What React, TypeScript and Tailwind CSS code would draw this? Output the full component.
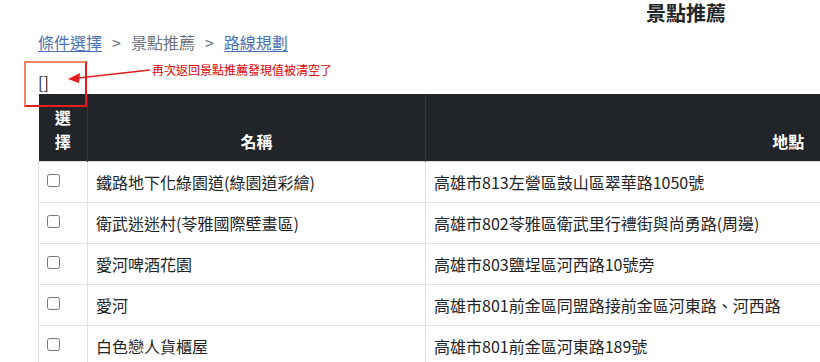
import React from "react";

const spots = [
  { name: "鐵路地下化綠園道(綠園道彩繪)", address: "高雄市813左營區鼓山區翠華路1050號" },
  { name: "衛武迷迷村(苓雅國際壁畫區)", address: "高雄市802苓雅區衛武里行禮街與尚勇路(周邊)" },
  { name: "愛河啤酒花園", address: "高雄市803鹽埕區河西路10號旁" },
  { name: "愛河", address: "高雄市801前金區同盟路接前金區河東路、河西路" },
  { name: "白色戀人貨櫃屋", address: "高雄市801前金區河東路189號" },
];

const App = () => {
  return (
    <div
      className="relative w-[820px] h-[362px] overflow-hidden bg-white text-[#212529]"
      style={{ fontFamily: '"Noto Sans CJK TC", "Noto Sans", sans-serif' }}
    >
      <div className="pl-[38px] w-[1334px]">
        {/* Title */}
        <h2 className="pt-[1px] flex justify-center text-[20px] font-bold leading-6 text-[#212529]">
          <span>景點推薦</span>
        </h2>

        {/* Breadcrumb */}
        <div className="mt-[5px] text-base leading-6 text-[#6c757d] flex items-center">
          <a href="#" className="text-[#4a72b8] underline underline-offset-2">
            條件選擇
          </a>
          <span className="px-[10px]">&gt;</span>
          <span>景點推薦</span>
          <span className="px-[10px]">&gt;</span>
          <a href="#" className="text-[#4a72b8] underline underline-offset-2">
            路線規劃
          </a>
        </div>

        <div className="mt-4 text-base leading-6">[]</div>

        {/* Table */}
        <table className="table-fixed border-collapse w-[1112px] text-base leading-6">
          <colgroup>
            <col className="w-[49px]" />
            <col className="w-[338px]" />
            <col className="w-[725px]" />
          </colgroup>
          <thead>
            <tr className="bg-[#212529] text-white h-[67px]">
              <th className="px-2 py-2 align-bottom font-bold text-center border-r border-[#32383e]">
                選<br />擇
              </th>
              <th className="px-2 py-2 align-bottom font-bold text-center border-r border-[#32383e]">名稱</th>
              <th className="px-2 py-2 align-bottom font-bold text-center">地點</th>
            </tr>
          </thead>
          <tbody>
            {spots.map((spot) => (
              <tr key={spot.name} className="h-[41px]">
                <td className="px-2 py-2 border border-[#dee2e6] align-top">
                  <input type="checkbox" className="block w-[13px] h-[13px] m-0 mt-1" />
                </td>
                <td className="px-2 py-2 border border-[#dee2e6] align-middle">{spot.name}</td>
                <td className="px-2 py-2 border border-[#dee2e6] align-middle">{spot.address}</td>
              </tr>
            ))}
          </tbody>
        </table>
      </div>

      {/* annotation */}
      <div className="absolute left-[24px] top-[61px] w-[63px] h-[46px] border-2 border-t-[#f38565] border-l-[#f38565] border-r-[#e51d1d] border-b-[#e51d1d]" />
      <svg className="absolute left-[64px] top-[64px]" width="90" height="20" viewBox="0 0 90 20">
        <line x1="86" y1="6" x2="14" y2="14" stroke="#e51d1d" strokeWidth="1.3" />
        <polygon points="4,15 16,9 15,19" fill="#e51d1d" />
      </svg>
      <div className="absolute left-[152px] top-[62px] text-[12px] leading-4 text-[#e00000]">
        再次返回景點推薦發現值被清空了
      </div>
    </div>
  );
};

export default App;
